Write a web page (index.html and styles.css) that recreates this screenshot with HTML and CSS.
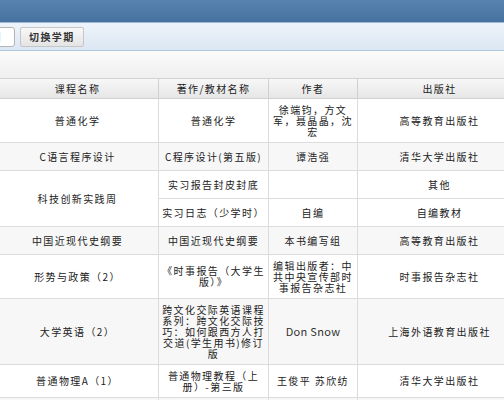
FILE: index.html
```html
<!DOCTYPE html>
<html lang="zh-CN">
<head>
  <meta charset="UTF-8" />
  <meta name="viewport" content="width=device-width, initial-scale=1.0" />
  <title>教材信息查询</title>
  <link rel="stylesheet" href="styles.css">
</head>
<body>
  <div class="topbar"></div>

  <div class="toolbar">
    <div class="term-select">2015-2016学年第一学期</div>
    <button class="term-button">切换学期</button>
  </div>

  <div class="subbar"></div>

  <table class="book-table">
    <colgroup>
      <col class="c1">
      <col class="c2">
      <col class="c3">
      <col class="c4">
    </colgroup>
    <thead>
      <tr>
        <th>课程名称</th>
        <th>著作/教材名称</th>
        <th>作者</th>
        <th>出版社</th>
      </tr>
    </thead>
    <tbody>
      <tr>
        <td>普通化学</td>
        <td>普通化学</td>
        <td>徐端钧，方文军，聂晶晶，沈宏</td>
        <td>高等教育出版社</td>
      </tr>
      <tr class="alt">
        <td>C语言程序设计</td>
        <td>C程序设计(第五版)</td>
        <td>谭浩强</td>
        <td>清华大学出版社</td>
      </tr>
      <tr>
        <td rowspan="2">科技创新实践周</td>
        <td>实习报告封皮封底</td>
        <td></td>
        <td>其他</td>
      </tr>
      <tr>
        <td>实习日志（少学时）</td>
        <td>自编</td>
        <td>自编教材</td>
      </tr>
      <tr class="alt">
        <td>中国近现代史纲要</td>
        <td>中国近现代史纲要</td>
        <td>本书编写组</td>
        <td>高等教育出版社</td>
      </tr>
      <tr>
        <td>形势与政策（2）</td>
        <td>《时事报告（大学生版）》</td>
        <td>编辑出版者：中共中央宣传部时事报告杂志社</td>
        <td>时事报告杂志社</td>
      </tr>
      <tr class="alt">
        <td>大学英语（2）</td>
        <td>跨文化交际英语课程系列：跨文化交际技巧：如何跟西方人打交道(学生用书)修订版</td>
        <td class="latin">Don Snow</td>
        <td>上海外语教育出版社</td>
      </tr>
      <tr>
        <td>普通物理A（1）</td>
        <td>普通物理教程（上册）-第三版</td>
        <td>王俊平 苏欣纺</td>
        <td>清华大学出版社</td>
      </tr>
      <tr class="alt">
        <td>大学生职业发展与就业指导</td>
        <td>《大学生职业生涯发展与规划》</td>
        <td>本书编写组</td>
        <td>高等教育出版社</td>
      </tr>
    </tbody>
  </table>
</body>
</html>
```

FILE: styles.css
```css
html,
body {
  margin: 0;
  overflow: hidden;
}

body {
  font-family: "Noto Sans CJK SC", "DejaVu Sans", sans-serif;
  font-size: 10px;
  color: #222;
  background-color: #ffffff;
}

.topbar {
  height: 22px;
  background: linear-gradient(180deg, #5883b1, #46729f);
  border-bottom: 1px solid #9db9d6;
}

.toolbar {
  height: 27px;
  display: flex;
  align-items: center;
  gap: 5px;
  background: linear-gradient(180deg, #eef4fb, #dbe7f3);
  border-bottom: 1px solid #b2c8de;
}

.term-select {
  width: 28px;
  height: 18px;
  margin-left: -27px;
  padding-right: 12px;
  line-height: 18px;
  background-color: #ffffff;
  border: 1px solid #b4b4b4;
  border-radius: 3px;
  overflow: hidden;
  white-space: nowrap;
  direction: rtl;
  text-align: right;
  letter-spacing: 1.4px;
}

.term-button {
  height: 20px;
  padding: 0 8px;
  font-family: inherit;
  font-size: 10px;
  font-weight: bold;
  letter-spacing: 1.4px;
  color: #333;
  background: linear-gradient(180deg, #f8f8f8, #e4e4e4);
  border: 1px solid #c6c6c6;
  border-radius: 2px;
}

.subbar {
  height: 27px;
  background: linear-gradient(180deg, #fbfbfb, #efefef);
  border-bottom: 1px solid #d2d2d2;
}

.book-table {
  width: 525px;
  margin-left: -4px;
  border-collapse: collapse;
  table-layout: fixed;
}

.c1 { width: 162px; }
.c2 { width: 110px; }
.c3 { width: 89px; }
.c4 { width: 164px; }

.book-table thead tr {
  height: 19px;
}

.book-table th {
  padding: 0 3px;
  line-height: 17px;
  font-weight: normal;
  letter-spacing: 1.4px;
  background: linear-gradient(180deg, #f7f7f7, #e6e6e6);
  border: 1px solid #d0d0d0;
  border-top: none;
}

.book-table tbody tr {
  height: 28px;
}

.book-table td {
  padding: 5px 3px;
  line-height: 11px;
  letter-spacing: 1.4px;
  text-align: center;
  border: 1px solid #dcdcdc;
}

.book-table td.latin {
  font-size: 11px;
  letter-spacing: 0.3px;
  color: #333;
}

.book-table tr.alt td {
  background-color: #f7f7f7;
}
```
